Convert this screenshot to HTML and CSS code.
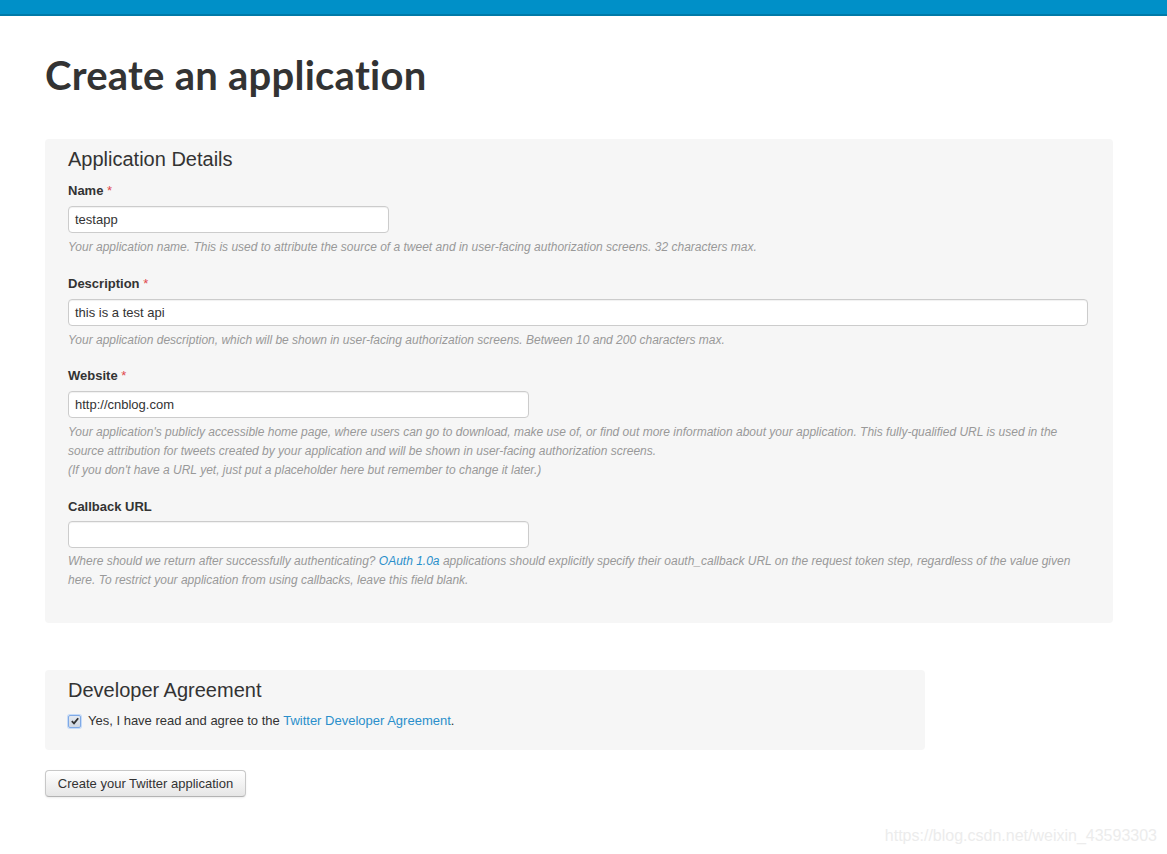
FILE: index.html
```html
<!DOCTYPE html>
<html>
<head>
<meta charset="utf-8">
<link rel="stylesheet" href="styles.css">
</head>
<body>
<div class="topbar"></div>
<main class="page">
  <h1 class="title">Create an application</h1>

  <section class="panel panel-details">
    <h2 class="panel-title">Application Details</h2>

    <div class="field">
      <label class="label">Name <span class="req">*</span></label>
      <div class="input input-sm">testapp</div>
      <p class="help">Your application name. This is used to attribute the source of a tweet and in user-facing authorization screens. 32 characters max.</p>
    </div>

    <div class="field">
      <label class="label">Description <span class="req">*</span></label>
      <div class="input input-full">this is a test api</div>
      <p class="help">Your application description, which will be shown in user-facing authorization screens. Between 10 and 200 characters max.</p>
    </div>

    <div class="field field-web">
      <label class="label">Website <span class="req">*</span></label>
      <div class="input input-md">http://cnblog.com</div>
      <p class="help">Your application's publicly accessible home page, where users can go to download, make use of, or find out more information about your application. This fully-qualified URL is used in the source attribution for tweets created by your application and will be shown in user-facing authorization screens.<br>(If you don't have a URL yet, just put a placeholder here but remember to change it later.)</p>
    </div>

    <div class="field field-last">
      <label class="label">Callback URL</label>
      <div class="input input-md"></div>
      <p class="help">Where should we return after successfully authenticating? <a class="link" href="#">OAuth&nbsp;1.0a</a> applications should explicitly specify their oauth_callback URL on the request token step, regardless of the value given here. To restrict your application from using callbacks, leave this field blank.</p>
    </div>
  </section>

  <section class="panel panel-agree">
    <h2 class="panel-title">Developer Agreement</h2>
    <div class="agree-row">
      <span class="checkbox">
        <svg width="8" height="8" viewBox="0 0 8 8"><path d="M0.8 4.2 L3 6.4 L7.2 1.2" fill="none" stroke="#333" stroke-width="1.8"/></svg>
      </span>
      <span class="agree-text">Yes, I have read and agree to the <a class="link" href="#">Twitter Developer Agreement</a>.</span>
    </div>
  </section>

  <button class="btn">Create your Twitter application</button>
</main>
<div class="watermark">https://blog.csdn.net/weixin_43593303</div>
</body>
</html>
```

FILE: styles.css
```css
html, body {
  margin: 0;
  padding: 0;
  background: #fff;
}
body {
  font-family: "Liberation Sans", Arial, sans-serif;
  color: #333;
  position: relative;
  min-height: 854px;
}
.topbar {
  height: 14px;
  background: #0090c8;
  border-bottom: 2px solid #007aa8;
}
.page {
  padding: 0 54px 0 45px;
}
.title {
  margin: 0;
  padding-top: 35px;
  font-family: "Lato", "Open Sans", sans-serif;
  font-weight: 700;
  font-size: 40px;
  line-height: 48px;
  color: #333;
  letter-spacing: 0.25px;
}
.panel {
  background: #f6f6f6;
  border-radius: 4px;
  padding: 8px 25px 0 23px;
}
.panel-details {
  margin-top: 40px;
  padding-bottom: 33px;
}
.panel-agree {
  margin-top: 47px;
  width: 832px;
  padding-bottom: 19px;
}
.panel-title {
  margin: 0;
  font-size: 20px;
  font-weight: 400;
  line-height: 24px;
  color: #333;
}
.field {
  margin-top: 10px;
}
.field + .field {
  margin-top: 17px;
}
.field + .field-web {
  margin-top: 16px;
}
.label {
  display: block;
  font-size: 13px;
  font-weight: 700;
  line-height: 20px;
  color: #333;
}
.req {
  color: #e0474c;
  font-weight: 400;
}
.input {
  box-sizing: border-box;
  margin-top: 5px;
  height: 27px;
  background: #fff;
  border: 1px solid #ccc;
  border-radius: 4px;
  box-shadow: inset 0 1px 1px rgba(0,0,0,0.06);
  padding: 0 6px;
  font-size: 13px;
  line-height: 25px;
  color: #333;
}
.input-sm { width: 321px; }
.input-md { width: 461px; }
.input-full { width: 100%; }
.help {
  margin: 5px 0 0;
  font-size: 12px;
  font-style: italic;
  line-height: 19px;
  color: #999;
}
.field-last .input {
  margin-top: 4px;
}
.field-last .help {
  margin-top: 4px;
}
.link {
  color: #2a8fcb;
  text-decoration: none;
}
.agree-row {
  display: flex;
  align-items: center;
  gap: 7px;
  margin-top: 9px;
  font-size: 13px;
  line-height: 20px;
}
.checkbox {
  box-sizing: border-box;
  width: 13px;
  height: 13px;
  border: 1px solid #7fa9e6;
  border-radius: 2px;
  background: linear-gradient(#e4e9f0, #cfd7e2);
  display: flex;
  align-items: center;
  justify-content: center;
  box-shadow: 0 0 0 1px #c5dbf8;
}
.agree-text {
  color: #333;
}
.btn {
  display: block;
  margin-top: 20px;
  width: 201px;
  height: 27px;
  font-family: "Liberation Sans", Arial, sans-serif;
  font-size: 13px;
  color: #333;
  background: linear-gradient(#ffffff, #e6e6e6);
  border: 1px solid #c8c8c8;
  border-bottom-color: #b3b3b3;
  border-radius: 4px;
  box-shadow: 0 1px 2px rgba(0,0,0,0.08);
  padding: 0;
}
.watermark {
  position: absolute;
  right: 10px;
  top: 827px;
  font-size: 16px;
  color: #ececec;
  font-family: "Liberation Sans", Arial, sans-serif;
}
```
